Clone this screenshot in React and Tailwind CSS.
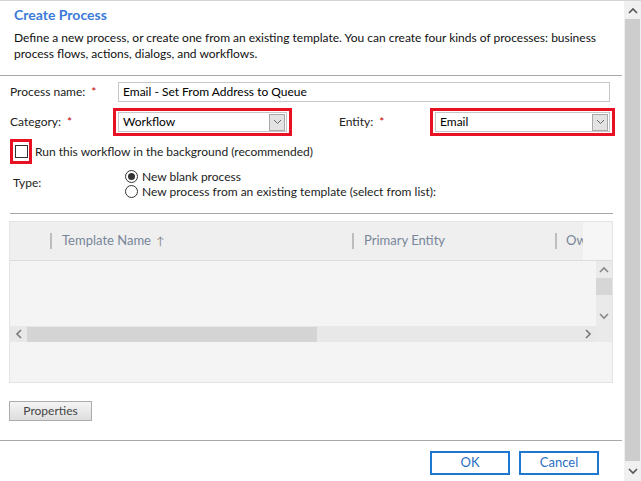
import React from "react";

const FONT = "font-['Lato','Liberation_Sans',sans-serif]";

function Chevron({ dir = "down", className = "" }) {
  const d = {
    down: "M1 3 L5 7 L9 3",
    up: "M1 7 L5 3 L9 7",
    left: "M7 1 L3 5 L7 9",
    right: "M3 1 L7 5 L3 9",
  }[dir];
  return (
    <svg width="10" height="10" viewBox="0 0 10 10" className={className}>
      <path d={d} fill="none" stroke="currentColor" strokeWidth="1.6" />
    </svg>
  );
}

function Select({ value }) {
  return (
    <div className="flex h-[20px] items-center border border-[#c6c6c6] bg-white">
      <span className="flex-1 pl-[4px] text-[12px] text-black">{value}</span>
      <span className="mr-[1px] flex h-[17px] w-[16px] items-center justify-center border border-[#a9a9a9] bg-[#e3e3e3] text-[#666]">
        <svg width="9" height="6" viewBox="0 0 9 6">
          <path d="M1 1 L4.5 4.5 L8 1" fill="none" stroke="currentColor" strokeWidth="1" />
        </svg>
      </span>
    </div>
  );
}

function Star() {
  return <span className="ml-[6px] text-[#c00000]">*</span>;
}

function Radio({ checked }) {
  return (
    <span className="flex h-[13px] w-[13px] items-center justify-center rounded-full border border-[#333] bg-white">
      {checked && <span className="h-[7px] w-[7px] rounded-full bg-[#333]" />}
    </span>
  );
}

export default function App() {
  return (
    <div className={`${FONT} relative flex h-[481px] w-[641px] overflow-hidden border-t border-[#d4d4d4] bg-white text-[12px] text-[#222]`}>
      <div className="w-[624px] shrink-0">
        <div className="px-[14px] pt-[5px]">
          <div className="text-[14px] font-bold leading-[18px] text-[#3b7bd8]">Create Process</div>
          <p className="mt-[6px] leading-[16px] text-[#111]">
            Define a new process, or create one from an existing template. You can create four kinds of processes: business process flows, actions, dialogs, and workflows.
          </p>
        </div>

        <div className="mt-[13px] mr-[2px] border-t border-[#a8a8a8]" />

        <div className="pl-[10px]">
          <div className="mt-[6px] flex h-[20px] items-center">
            <span className="w-[108px] shrink-0">Process name:<Star /></span>
            <div className="flex h-[20px] w-[492px] items-center border border-[#c6c6c6] pl-[4px] text-black">
              Email - Set From Address to Queue
            </div>
          </div>

          <div className="mt-[6px] flex h-[28px] items-center">
            <span className="w-[103px] shrink-0">Category:<Star /></span>
            <div className="w-[179px] border-[3px] border-[#e81123] px-[2px] py-[1px]">
              <Select value="Workflow" />
            </div>
            <span className="ml-[47px] w-[91px] shrink-0">Entity:<Star /></span>
            <div className="w-[185px] border-[3px] border-[#e81123] px-[2px] py-[1px]">
              <Select value="Email" />
            </div>
          </div>

          <div className="mt-[3px] flex h-[25px] items-center">
            <div className="flex h-[25px] w-[22px] items-center justify-center border-[3px] border-[#e81123]">
              <span className="h-[13px] w-[13px] border border-[#333] bg-white" />
            </div>
            <span className="ml-[3px]">Run this workflow in the background (recommended)</span>
          </div>

          <div className="mt-[5px] flex">
            <span className="w-[115px] shrink-0 pl-[3px] pt-[5px]">Type:</span>
            <div className="flex flex-col">
              <div className="flex h-[15px] items-center gap-[4px]">
                <Radio checked />
                <span>New blank process</span>
              </div>
              <div className="flex h-[15px] items-center gap-[4px]">
                <Radio />
                <span>New process from an existing template (select from list):</span>
              </div>
            </div>
          </div>
        </div>

        <div className="mt-[14px] ml-[10px] w-[603px] border-t border-[#a8a8a8]" />

        <div className="mt-[7px] ml-[9px] w-[604px] border border-[#e4e4e4] bg-[#f4f4f4]">
          <div className="flex h-[39px] items-center border-b border-[#dcdcdc] bg-[#efefef] text-[13px] text-[#778699]">
            <div className="w-[40px] shrink-0" />
            <div className="flex w-[302px] shrink-0 items-center">
              <span className="h-[16px] w-[2px] bg-[#bdbdbd]" />
              <span className="ml-[10px]">Template Name</span>
              <span className="ml-[5px] text-[11px] text-[#8a8a8a]">↑</span>
            </div>
            <div className="flex w-[203px] shrink-0 items-center">
              <span className="h-[16px] w-[2px] bg-[#bdbdbd]" />
              <span className="ml-[10px]">Primary Entity</span>
            </div>
            <div className="flex w-[28px] shrink-0 items-center whitespace-nowrap">
              <span className="h-[16px] w-[2px] shrink-0 bg-[#bdbdbd]" />
              <span className="ml-[9px]">Ow</span>
            </div>
            <div className="h-full flex-1 bg-[#f6f6f6]" />
          </div>

          <div className="flex h-[81px]">
            <div className="flex flex-1 flex-col">
              <div className="flex-1" />
              <div className="flex h-[16px] items-center bg-[#e8e8e8] text-[#777]">
                <span className="flex w-[17px] justify-center"><Chevron dir="left" /></span>
                <span className="h-[15px] w-[290px] bg-[#d4d4d4]" />
                <span className="flex-1" />
                <span className="flex w-[17px] justify-center"><Chevron dir="right" /></span>
              </div>
            </div>
            <div className="flex w-[16px] flex-col items-center bg-[#eaeaea] text-[#888]">
              <span className="mt-[4px]"><Chevron dir="up" /></span>
              <span className="mt-[3px] h-[17px] w-[16px] bg-[#d6d6d6]" />
              <span className="mt-[16px]"><Chevron dir="down" /></span>
            </div>
          </div>
          <div className="h-[40px]" />
        </div>

        <div className="mt-[18px] ml-[9px]">
          <button className="h-[20px] w-[83px] border border-[#acacac] bg-gradient-to-b from-[#f4f4f4] to-[#dedede] text-[12px] text-[#444]">
            Properties
          </button>
        </div>

        <div className="mt-[19px] mr-[2px] border-t border-[#a8a8a8]" />

        <div className="mt-[10px] flex justify-end gap-[9px] pr-[25px]">
          <button className="h-[24px] w-[80px] border-2 border-[#1e78d2] bg-white text-[13px] text-[#2b6fc4]">OK</button>
          <button className="h-[24px] w-[80px] border-2 border-[#1e78d2] bg-white text-[13px] text-[#2b6fc4]">Cancel</button>
        </div>
      </div>

      <div className="flex w-[17px] flex-col items-center bg-[#f0f0f0] text-[#555]">
        <span className="mt-[5px] h-[12px]"><Chevron dir="up" /></span>
        <span className="mt-[1px] h-[442px] w-[15px] bg-[#cdcdcd]" />
        <span className="mt-[5px]"><Chevron dir="down" /></span>
      </div>
    </div>
  );
}
